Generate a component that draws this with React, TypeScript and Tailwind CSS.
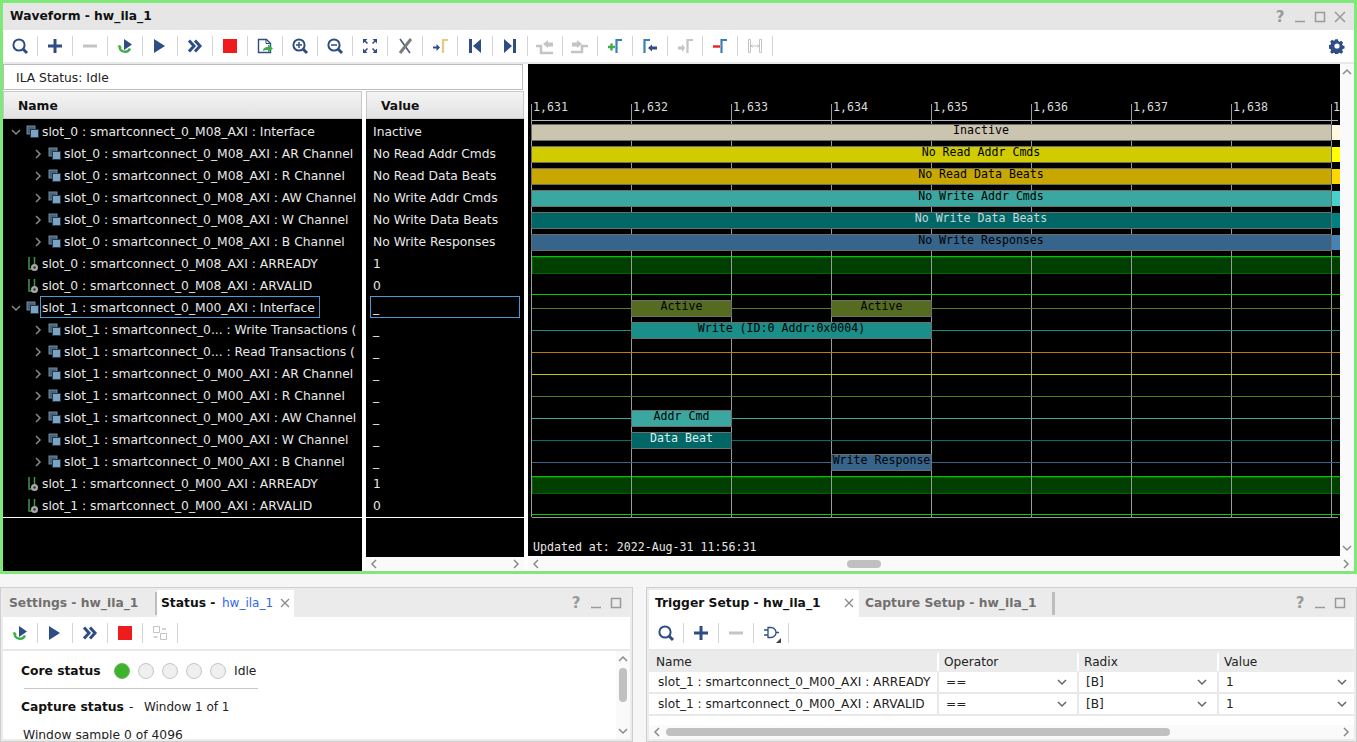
const BLUE = "#2f4d85";
const GREY = "#c4c4c4";
const MARK = "#3a80b8";

function Ico({ children }: { children: React.ReactNode }) {
  return (
    <svg width="20" height="20" viewBox="0 0 20 20" fill="none">
      {children}
    </svg>
  );
}

const LENS = (
  <>
    <circle cx="9" cy="9" r="5.6" stroke={BLUE} strokeWidth="2" />
    <path d="M13 13l4 4" stroke={BLUE} strokeWidth="3" />
  </>
);

const TOOL_ICONS: Record<string, React.ReactNode> = {
  search: LENS,
  plus: <path d="M3 10h14M10 3v14" stroke={BLUE} strokeWidth="3" />,
  minus: <path d="M3 10h14" stroke={GREY} strokeWidth="3" />,
  rerun: (
    <>
      <path d="M4.500 10.500a5.500 5.500 0 0 0 10.500 2" stroke="#3fae49" strokeWidth="2.400" />
      <path d="M2 10l3-1 2 3z" fill="#3fae49" />
      <path d="M9 3l8 5.500-8 5.500z" fill={BLUE} />
    </>
  ),
  play: <path d="M4 3l11 7-11 7z" fill={BLUE} />,
  fast: <path d="M4 4.500l5 5.500-5 5.500M10 4.500l5 5.500-5 5.500" stroke={BLUE} strokeWidth="3" />,
  stop: <rect x="3" y="3" width="14" height="14" fill="#ee1c1c" />,
  export: (
    <>
      <path d="M3.500 3.500h8l4 4v9h-12z" stroke={BLUE} strokeWidth="1.400" fill="white" />
      <path d="M11 3.500v4h4" stroke={BLUE} />
      <path d="M8 15c0-3 2-4 5-4v-2.500l5 4-5 4v-2.500c-2 0-4 0-5 1z" fill="#3fae49" />
    </>
  ),
  zoomIn: (
    <>
      {LENS}
      <path d="M6 9h6M9 6v6" stroke={BLUE} strokeWidth="1.500" />
    </>
  ),
  zoomOut: (
    <>
      {LENS}
      <path d="M6 9h6" stroke={BLUE} strokeWidth="1.500" />
    </>
  ),
  fit: (
    <>
      <path d="M3 3h4.500L3 7.500zM17 3h-4.500L17 7.500zM3 17h4.500L3 12.500zM17 17h-4.500l4.500-4.500z" fill={BLUE} />
      <path d="M4 4l3.500 3.500M16 4l-3.500 3.500M4 16l3.500-3.500M16 16l-3.500-3.500" stroke={BLUE} strokeWidth="1.500" />
    </>
  ),
  cut: (
    <>
      <path d="M5 3l10 14" stroke="#4a5a78" strokeWidth="1.600" />
      <path d="M16 3L5 17" stroke="#7d7d7d" strokeWidth="3" />
    </>
  ),
  goMark: (
    <>
      <path d="M3 10.500h3.500V8l3.500 3.500-3.500 3.500v-2.500H3z" fill={BLUE} />
      <path d="M13 17V4h5" stroke="#e6c97c" strokeWidth="2.200" />
    </>
  ),
  first: <path d="M4 3h3v14H4zM16 3v14l-8-7z" fill={BLUE} />,
  last: <path d="M13 3h3v14h-3zM4 3v14l8-7z" fill={BLUE} />,
  prevTrans: (
    <>
      <path d="M1 10h5v7h12" stroke={GREY} strokeWidth="2.500" />
      <path d="M8 8l5-4v2.500h5v4h-5V12z" fill={GREY} />
    </>
  ),
  nextTrans: (
    <>
      <path d="M1 16h11v-6h6" stroke={GREY} strokeWidth="2.500" />
      <path d="M12 8L7 4v2.500H2v4h5V12z" fill={GREY} />
    </>
  ),
  addMark: (
    <>
      <path d="M3 11h7M6.500 7.500v7" stroke="#3fae49" strokeWidth="2.400" />
      <path d="M11.500 17V4H17" stroke={MARK} strokeWidth="2.200" />
    </>
  ),
  prevMark: (
    <>
      <path d="M4.500 17V4H10" stroke={MARK} strokeWidth="2.200" />
      <path d="M8 12l4-3.500v2h5v3h-5v2z" fill={BLUE} />
    </>
  ),
  nextMark: (
    <>
      <path d="M3 10.500h4V8l3 4-3 4v-2.500H3z" fill={GREY} />
      <path d="M12.500 17V4H18" stroke={GREY} strokeWidth="2.200" />
    </>
  ),
  delMark: (
    <>
      <path d="M3 10.500h7" stroke="#ee1c1c" strokeWidth="2.400" />
      <path d="M11.500 17V4H17" stroke={MARK} strokeWidth="2.200" />
    </>
  ),
  span: (
    <>
      <path d="M3.500 3.500h2v13h-2zM14.500 3.500h2v13h-2z" stroke={GREY} />
      <path d="M6 10h8M7.500 8.500L6 10l1.500 1.500M12.500 8.500L14 10l-1.500 1.500" stroke={GREY} />
    </>
  ),
  swap: (
    <>
      <path d="M3.500 3.500h6v6h-6zM10.500 10.500h6v6h-6z" stroke={GREY} />
      <path d="M12 6h4M3.500 14h4" stroke={GREY} strokeWidth="1.500" />
    </>
  ),
  gate: (
    <>
      <path d="M7 4.500v10h3a5 5 0 0 0 0-10zM3 7h4M3 12h4M15 9.500h3" stroke={BLUE} strokeWidth="1.300" />
      <path d="M20 20v-5l-5 5z" fill="#444" />
    </>
  ),
};

function Tool({ name }: { name: string }) {
  return (
    <div className="flex h-5 w-[35px] shrink-0 items-center justify-center border-r border-[#d4d4d4]">
      <Ico>{TOOL_ICONS[name]}</Ico>
    </div>
  );
}

function Chevron({ dir, color = "#8a8a8a" }: { dir: "up" | "down" | "left" | "right"; color?: string }) {
  const d = {
    up: "M2 8l4-4 4 4",
    down: "M2 4l4 4 4-4",
    left: "M8 2L4 6l4 4",
    right: "M4 2l4 4-4 4",
  }[dir];
  return (
    <svg width="12" height="12" viewBox="0 0 12 12" fill="none">
      <path d={d} stroke={color} strokeWidth="1.500" />
    </svg>
  );
}

function WinButtons({ close }: { close?: boolean }) {
  return (
    <div className="flex items-center text-[#9a9a9a]">
      <span className="w-5 pt-px text-center text-[15px] font-bold leading-none">?</span>
      <svg width="20" height="14" viewBox="0 0 20 14" fill="none">
        <path d="M5 11.500h10" stroke="#9a9a9a" strokeWidth="1.500" />
      </svg>
      <svg width="20" height="14" viewBox="0 0 20 14" fill="none">
        <rect x="5.500" y="2.500" width="9" height="9" stroke="#9a9a9a" strokeWidth="1.500" />
      </svg>
      {close ? (
        <svg width="20" height="14" viewBox="0 0 20 14" fill="none">
          <path d="M5 2l10 10M15 2L5 12" stroke="#9a9a9a" strokeWidth="1.500" />
        </svg>
      ) : null}
    </div>
  );
}

function CloseX() {
  return (
    <svg width="10" height="10" viewBox="0 0 10 10" fill="none">
      <path d="M1 1l8 8M9 1L1 9" stroke="#8a8a8a" strokeWidth="1.300" />
    </svg>
  );
}

function GroupIcon() {
  return (
    <svg width="14" height="14" viewBox="0 0 14 14" fill="none">
      <rect x="1" y="1" width="8" height="8" fill="#46627c" stroke="#76899b" />
      <rect x="4.500" y="4.500" width="8" height="8" fill="#7ba3c4" stroke="#22384c" />
    </svg>
  );
}

function BitIcon() {
  return (
    <svg width="14" height="16" viewBox="0 0 14 16" fill="none">
      <path d="M3 1v12h3M8.500 1v7" stroke="#3f9a45" strokeWidth="1.500" />
      <circle cx="8.500" cy="11.500" r="3.500" fill="#a8a8a8" />
      <circle cx="8.500" cy="11.500" r="1.200" fill="#333" />
    </svg>
  );
}

type Row = { label: string; value: string; level: number; kind: "open" | "closed" | "bit"; selected?: boolean };

const ROWS: Row[] = [
  { label: "slot_0 : smartconnect_0_M08_AXI : Interface", value: "Inactive", level: 0, kind: "open" },
  { label: "slot_0 : smartconnect_0_M08_AXI : AR Channel", value: "No Read Addr Cmds", level: 1, kind: "closed" },
  { label: "slot_0 : smartconnect_0_M08_AXI : R Channel", value: "No Read Data Beats", level: 1, kind: "closed" },
  { label: "slot_0 : smartconnect_0_M08_AXI : AW Channel", value: "No Write Addr Cmds", level: 1, kind: "closed" },
  { label: "slot_0 : smartconnect_0_M08_AXI : W Channel", value: "No Write Data Beats", level: 1, kind: "closed" },
  { label: "slot_0 : smartconnect_0_M08_AXI : B Channel", value: "No Write Responses", level: 1, kind: "closed" },
  { label: "slot_0 : smartconnect_0_M08_AXI : ARREADY", value: "1", level: 0, kind: "bit" },
  { label: "slot_0 : smartconnect_0_M08_AXI : ARVALID", value: "0", level: 0, kind: "bit" },
  { label: "slot_1 : smartconnect_0_M00_AXI : Interface", value: "_", level: 0, kind: "open", selected: true },
  { label: "slot_1 : smartconnect_0... : Write Transactions (", value: "_", level: 1, kind: "closed" },
  { label: "slot_1 : smartconnect_0... : Read Transactions (", value: "_", level: 1, kind: "closed" },
  { label: "slot_1 : smartconnect_0_M00_AXI : AR Channel", value: "_", level: 1, kind: "closed" },
  { label: "slot_1 : smartconnect_0_M00_AXI : R Channel", value: "_", level: 1, kind: "closed" },
  { label: "slot_1 : smartconnect_0_M00_AXI : AW Channel", value: "_", level: 1, kind: "closed" },
  { label: "slot_1 : smartconnect_0_M00_AXI : W Channel", value: "_", level: 1, kind: "closed" },
  { label: "slot_1 : smartconnect_0_M00_AXI : B Channel", value: "_", level: 1, kind: "closed" },
  { label: "slot_1 : smartconnect_0_M00_AXI : ARREADY", value: "1", level: 0, kind: "bit" },
  { label: "slot_1 : smartconnect_0_M00_AXI : ARVALID", value: "0", level: 0, kind: "bit" },
];

function NameRow({ row }: { row: Row }) {
  return (
    <div className="flex h-[22px] items-center whitespace-nowrap" style={{ paddingLeft: row.level * 22 }}>
      <span className="flex w-[23px] shrink-0 pl-[7px]">
        {row.kind === "open" ? <Chevron dir="down" color="#8a8a8a" /> : null}
        {row.kind === "closed" ? <Chevron dir="right" color="#8a8a8a" /> : null}
      </span>
      <span className="flex w-[14px] shrink-0 justify-center">
        {row.kind === "bit" ? <BitIcon /> : <GroupIcon />}
      </span>
      {row.selected ? (
        <span className="-mt-[2px] flex h-[22px] w-[280px] items-center border border-[#4a9bd5] pl-px pt-[2px]">{row.label}</span>
      ) : (
        <span className="ml-[2px]">{row.label}</span>
      )}
    </div>
  );
}

const TICKS = [531.5, 631.5, 731.5, 831.5, 931.5, 1031.5, 1131.5, 1231.5, 1331.5];
const MONO = "font-['DejaVu_Sans_Mono',monospace] text-[11.6px]";

const TOP_BARS = [
  { label: "Inactive", fill: "#cbc4ae", end: "#fff8dc", text: "#000" },
  { label: "No Read Addr Cmds", fill: "#d0cc00", end: "#ffff00", text: "#000" },
  { label: "No Read Data Beats", fill: "#c8a800", end: "#ffd700", text: "#000" },
  { label: "No Write Addr Cmds", fill: "#3aa8a0", end: "#48d1cc", text: "#000" },
  { label: "No Write Data Beats", fill: "#006666", end: "#008080", text: "#c8d8d8" },
  { label: "No Write Responses", fill: "#36648b", end: "#4682b4", text: "#000" },
];

const LINES = [
  { y: 308, color: "#5a7a1e" },
  { y: 330, color: "#1a8f8a" },
  { y: 352, color: "#c07c00" },
  { y: 374, color: "#c8c800" },
  { y: 396, color: "#5a7a1e" },
  { y: 418, color: "#3aa8a0" },
  { y: 440, color: "#006f75" },
  { y: 462, color: "#36648b" },
];

const PULSES = [
  { x: 631.5, w: 100, row: 8, label: "Active", fill: "#556b1f", text: "#000" },
  { x: 831.5, w: 100, row: 8, label: "Active", fill: "#556b1f", text: "#000" },
  { x: 631.5, w: 300, row: 9, label: "Write (ID:0 Addr:0x0004)", fill: "#1a8f8a", text: "#000" },
  { x: 631.5, w: 100, row: 13, label: "Addr Cmd", fill: "#3aa8a0", text: "#000" },
  { x: 631.5, w: 100, row: 14, label: "Data Beat", fill: "#006666", text: "#dfeeee" },
  { x: 831.5, w: 100, row: 15, label: "Write Response", fill: "#36648b", text: "#000" },
];

function Wave() {
  return (
    <svg width="812" height="492" viewBox="528 64 812 492" className="block bg-black">
      <g shapeRendering="crispEdges">
        <path d="M531.500 120.500H1338" stroke="#b8b8b8" />
        {[256.5, 476.5].map((y) => (
          <g key={y}>
            <rect x="532" y={y + 0.5} width="808" height="16" fill="#003f00" stroke="#006400" />
            <path d={`M532 ${y}H1340`} stroke="#00c800" />
          </g>
        ))}
        {TICKS.map((x) => (
          <path key={x} d={`M${x} 104V517`} stroke="#9a9a9a" />
        ))}
        <path d="M531.500 517.500H1338" stroke="#9a9a9a" />
        <path d="M532 294.500H1340M532 514.500H1340" stroke="#00d000" />
        {LINES.map((l) => (
          <path key={l.y} d={`M532 ${l.y + 0.5}H1340`} stroke={l.color} />
        ))}
        {TOP_BARS.map((b, i) => {
          const top = 124 + i * 22;
          return (
            <g key={b.label}>
              <rect x="531.500" y={top + 0.5} width="800" height="16" fill={b.fill} stroke="#6e6e6e" />
              <rect x="1332" y={top + 1} width="8" height="15" fill={b.end} />
            </g>
          );
        })}
        {PULSES.map((p) => (
          <rect key={`${p.x}-${p.row}`} x={p.x} y={124.5 + p.row * 22} width={p.w} height="16" fill={p.fill} stroke="#6e6e6e" />
        ))}
      </g>
      {TICKS.map((x, i) => (
        <text key={x} x={x + 1.5} y="110.500" fill="#d8d8d8" className={MONO}>
          {i === 8 ? "1" : `1,${631 + i}`}
        </text>
      ))}
      {TOP_BARS.map((b, i) => (
        <text key={b.label} x="981" y={134 + i * 22} textAnchor="middle" fill={b.text} className={MONO}>
          {b.label}
        </text>
      ))}
      {PULSES.map((p) => (
        <text key={`t${p.x}-${p.row}`} x={p.x + p.w / 2} y={134 + p.row * 22} textAnchor="middle" fill={p.text} className={MONO}>
          {p.label}
        </text>
      ))}
      <text x="533" y="551" fill="#e6e6e6" className={MONO}>
        Updated at: 2022-Aug-31 11:56:31
      </text>
    </svg>
  );
}

function HScroll({ children }: { children?: React.ReactNode }) {
  return (
    <div className="flex h-[14px] shrink-0 items-center bg-[#fafafa] px-[2px]">
      <Chevron dir="left" />
      <div className="flex min-w-0 flex-1 items-center">{children}</div>
      <Chevron dir="right" />
    </div>
  );
}

function WaveformPanel() {
  return (
    <section className="flex h-[574px] shrink-0 flex-col border-[3px] border-[#80e878] bg-white">
      <header className="flex h-[27px] shrink-0 items-center justify-between bg-[#e6e6e6] pl-[7px] pr-[4px]">
        <h1 className="text-[12.3px] font-bold text-[#111]">Waveform - hw_ila_1</h1>
        <WinButtons close />
      </header>
      <div className="flex h-8 shrink-0 items-center pr-[9px]">
        {["search", "plus", "minus", "rerun", "play", "fast", "stop", "export", "zoomIn", "zoomOut", "fit", "cut", "goMark", "first", "last", "prevTrans", "nextTrans", "addMark", "prevMark", "nextMark", "delMark", "span"].map((t) => (
          <Tool key={t} name={t} />
        ))}
        <svg className="ml-auto" width="16" height="16" viewBox="0 0 16 16">
          <path
            d="M6.500 1h3l.4 2 1.500.7 1.800-1.100 2 2.100-1.100 1.700.7 1.600 2 .5v2.800l-2 .4-.7 1.600 1.100 1.800-2 2-1.800-1.100-1.500.6-.4 2h-3l-.4-2-1.500-.6-1.800 1.100-2-2 1.100-1.800-.7-1.600-2-.4V7.500l2-.5.7-1.600-1.100-1.700 2-2.100 1.800 1.100 1.500-.7z"
            transform="translate(0.400 0.400) scale(0.9)"
            fill={BLUE}
          />
          <circle cx="8" cy="8" r="2.600" fill="white" />
        </svg>
      </div>
      <div className="flex min-h-0 flex-1 border-t-2 border-[#e8e8e8]">
        <div className="flex w-[521px] shrink-0 flex-col">
          <div className="mr-px flex h-[26px] shrink-0 items-center border border-[#bcbcbc] pl-3 pt-[2px] text-[12.3px] text-[#222]">ILA Status: Idle</div>
          <div className="flex min-h-0 flex-1 gap-1 pt-px">
            <div className="flex w-[359px] shrink-0 flex-col">
              <div className="flex h-7 shrink-0 items-center border border-[#c8c8c8] bg-gradient-to-b from-[#f4f4f4] to-[#e2e2e2] pl-[14px] pt-[2px] text-[12.3px] font-bold text-[#111]">Name</div>
              <div className="min-h-0 flex-1 overflow-hidden bg-black pt-[2px] text-[12.3px] text-[#e8e8e8]">
                {ROWS.map((r) => (
                  <NameRow key={r.label} row={r} />
                ))}
                <div className="border-t border-white" />
              </div>
            </div>
            <div className="flex w-[158px] shrink-0 flex-col">
              <div className="flex h-7 shrink-0 items-center border border-[#c8c8c8] bg-gradient-to-b from-[#f4f4f4] to-[#e2e2e2] pl-[14px] pt-[2px] text-[12.3px] font-bold text-[#111]">Value</div>
              <div className="min-h-0 flex-1 overflow-hidden bg-black pt-[2px] text-[12.3px] text-[#e8e8e8]">
                {ROWS.map((r) =>
                  r.selected ? (
                    <div key={r.label} className="mx-1 -mt-px mb-px flex h-[22px] items-center border border-[#4a9bd5] pl-[2px] pt-[2px]">
                      {r.value}
                    </div>
                  ) : (
                    <div key={r.label} className="flex h-[22px] items-center whitespace-nowrap pl-[7px]">
                      {r.value}
                    </div>
                  ),
                )}
                <div className="border-t border-white" />
              </div>
              <HScroll />
            </div>
          </div>
        </div>
        <div className="ml-1 flex min-w-0 flex-1 flex-col">
          <div className="flex h-[492px] shrink-0">
            <Wave />
            <div className="flex w-[14px] flex-col items-center justify-between bg-[#fafafa] py-[2px]">
              <Chevron dir="up" />
              <Chevron dir="down" />
            </div>
          </div>
          <div className="mt-px">
            <HScroll>
              <div className="ml-[305px] h-2 w-[34px] rounded bg-[#c0c0c0]" />
            </HScroll>
          </div>
        </div>
      </div>
    </section>
  );
}

function PanelFrame({ className, children }: { className: string; children: React.ReactNode }) {
  return (
    <section className={`flex flex-col border border-[#cfcfcf] ${className}`}>
      <div className="flex min-h-0 flex-1 flex-col border-2 border-[#ececec] bg-white">{children}</div>
    </section>
  );
}

function StatusPanel() {
  return (
    <PanelFrame className="w-[633px]">
      <div className="flex h-[27px] shrink-0 items-center bg-[#ebebeb] pb-px pr-[4px]">
        <span className="w-[152px] pl-[6px] text-[12.3px] font-bold text-[#707070]">Settings - hw_ila_1</span>
        <span className="h-[23px] w-[2px] bg-[#bdbdbd]" />
        <div className="-mb-px flex h-[27px] w-[137px] items-center whitespace-nowrap bg-white pb-px pl-1 text-[12.3px]">
          <span className="w-[61px] font-bold text-[#111]">Status -</span>
          <span className="text-[12px] text-[#3366ee]">hw_ila_1</span>
          <span className="ml-[7px]"><CloseX /></span>
        </div>
        <div className="ml-auto"><WinButtons /></div>
      </div>
      <div className="flex h-8 shrink-0 items-center">
        {["rerun", "play", "fast", "stop", "swap"].map((t) => (
          <Tool key={t} name={t} />
        ))}
      </div>
      <div className="flex min-h-0 flex-1 border-t-2 border-[#e8e8e8]">
        <div className="min-w-0 flex-1 overflow-hidden pl-[18px] pt-[10px] text-[12.3px] text-[#222]">
          <div className="flex h-5 items-center">
            <span className="w-[93px] font-bold text-[#111]">Core status</span>
            <span className="flex gap-2">
              <span className="size-4 rounded-full border border-[#6ab85f] bg-[#3db32c]" />
              {[0, 1, 2, 3].map((i) => (
                <span key={i} className="size-4 rounded-full border border-[#c4c4c4] bg-[#efefef]" />
              ))}
            </span>
            <span className="ml-2">Idle</span>
          </div>
          <div className="ml-[3px] mt-[7px] w-[234px] border-t border-[#c8c8c8]" />
          <div className="mt-2 flex h-5 items-center">
            <span className="font-bold text-[#111]">Capture status</span>
            <span className="ml-[5px] w-[15px]">-</span>
            <span className="text-[12px]">Window 1 of 1</span>
          </div>
          <div className="ml-[2px] mt-[9px] whitespace-nowrap">Window sample 0 of 4096</div>
        </div>
        <div className="flex w-[14px] shrink-0 flex-col items-center bg-[#fafafa] py-[2px]">
          <Chevron dir="up" />
          <div className="mt-[3px] h-[34px] w-2 rounded bg-[#c0c0c0]" />
          <div className="mt-auto"><Chevron dir="down" /></div>
        </div>
      </div>
    </PanelFrame>
  );
}

const TRIGGERS = [
  "slot_1 : smartconnect_0_M00_AXI : ARREADY",
  "slot_1 : smartconnect_0_M00_AXI : ARVALID",
];

function SelectCell({ text, className }: { text: string; className: string }) {
  return (
    <div className={`flex items-center justify-between border-l-2 border-[#e8e8e8] pl-[7px] ${className}`}>
      {text}
      <Chevron dir="down" color="#666" />
    </div>
  );
}

function TriggerPanel() {
  return (
    <PanelFrame className="w-[711px]">
      <div className="flex h-[27px] shrink-0 items-center bg-[#ebebeb] pb-px pr-[4px]">
        <div className="-mb-px flex h-[27px] w-[210px] items-center justify-between bg-white pb-px pl-[6px] pr-[5px] text-[12.3px] font-bold text-[#111]">
          Trigger Setup - hw_ila_1
          <CloseX />
        </div>
        <span className="ml-[6px] w-[187px] text-[12.3px] font-bold text-[#707070]">Capture Setup - hw_ila_1</span>
        <span className="h-[23px] w-[3px] bg-[#bdbdbd]" />
        <div className="ml-auto"><WinButtons /></div>
      </div>
      <div className="flex h-8 shrink-0 items-center">
        {["search", "plus", "minus", "gate"].map((t) => (
          <Tool key={t} name={t} />
        ))}
      </div>
      <div className="flex min-h-0 flex-1 flex-col border-t-2 border-[#e8e8e8] text-[12.15px] text-[#222]">
        <div className="flex h-[21px] shrink-0 items-center bg-[#ebebeb] pt-px">
          <span className="w-[288px] pl-[7px]">Name</span>
          <span className="w-[140px] border-l-2 border-white pl-[5px]">Operator</span>
          <span className="w-[140px] border-l-2 border-white pl-[5px]">Radix</span>
          <span className="flex-1 border-l-2 border-white pl-[5px]">Value</span>
        </div>
        {TRIGGERS.map((t) => (
          <div key={t} className="flex h-[22px] shrink-0 border-b-2 border-[#e8e8e8]">
            <span className="flex w-[288px] items-center whitespace-nowrap pl-[9px]">{t}</span>
            <SelectCell text="==" className="w-[140px] pr-[9px]" />
            <SelectCell text="[B]" className="w-[140px] pr-[9px]" />
            <SelectCell text="1" className="flex-1 pr-[6px]" />
          </div>
        ))}
        <div className="mt-auto">
          <HScroll>
            <div className="ml-[3px] h-2 w-[504px] rounded bg-[#c0c0c0]" />
          </HScroll>
        </div>
      </div>
    </PanelFrame>
  );
}

export default function App() {
  return (
    <div className="flex h-[742px] w-[1357px] flex-col overflow-hidden bg-[#f6f6f6] font-['DejaVu_Sans',sans-serif]">
      <WaveformPanel />
      <div className="mt-[13px] flex min-h-0 flex-1 justify-between">
        <StatusPanel />
        <TriggerPanel />
      </div>
    </div>
  );
}
